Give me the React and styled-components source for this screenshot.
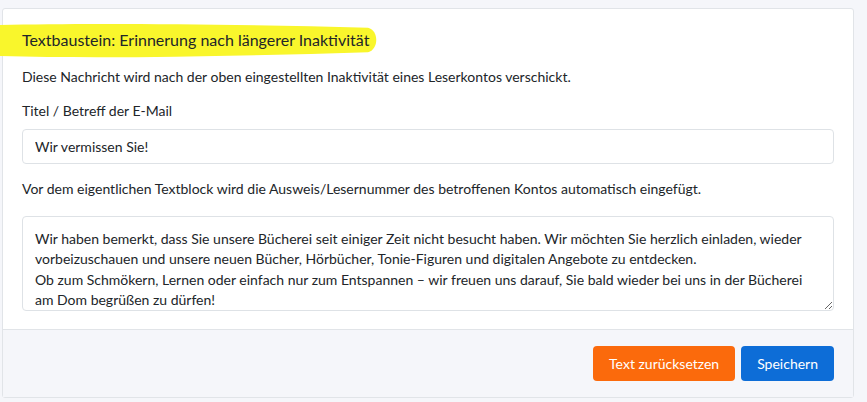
import styled, { createGlobalStyle } from 'styled-components'

const GlobalStyle = createGlobalStyle`
  html, body {
    margin: 0;
    background: #f5f6fa;
  }
  body {
    padding: 8px 13px 0 2px;
    font-family: "Segoe UI", Lato, sans-serif;
    color: #212529;
  }
`

const bodyText = `Wir haben bemerkt, dass Sie unsere Bücherei seit einiger Zeit nicht besucht haben. Wir möchten Sie herzlich einladen, wieder vorbeizuschauen und unsere neuen Bücher, Hörbücher, Tonie-Figuren und digitalen Angebote zu entdecken.
Ob zum Schmökern, Lernen oder einfach nur zum Entspannen – wir freuen uns darauf, Sie bald wieder bei uns in der Bücherei am Dom begrüßen zu dürfen!`

const App = () => {
  return (
    <>
      <GlobalStyle />
      <Card>
        <CardBody>
          <TitleWrap>
            <Highlight viewBox="0 0 380 36" preserveAspectRatio="none">
              <path d="M0 2 C 90 0, 230 1, 370 5 C 381 8, 381 27, 370 30 C 240 34, 110 37, 0 34 Z" fill="#f9f62c" />
            </Highlight>
            <Title>Textbaustein: Erinnerung nach längerer Inaktivität</Title>
          </TitleWrap>
          <Text $mt={14}>Diese Nachricht wird nach der oben eingestellten Inaktivität eines Leserkontos verschickt.</Text>
          <Label>Titel / Betreff der E-Mail</Label>
          <Input defaultValue="Wir vermissen Sie!" />
          <Text $mt={14}>Vor dem eigentlichen Textblock wird die Ausweis/Lesernummer des betroffenen Kontos automatisch eingefügt.</Text>
          <TextArea defaultValue={bodyText} />
        </CardBody>
        <Footer>
          <Button $bg="#fb6a0c">Text zurücksetzen</Button>
          <Button $bg="#0d6dd7">Speichern</Button>
        </Footer>
      </Card>
    </>
  )
}

export default App

const Card = styled.div`
  background: #fff;
  border: 1px solid #e1e4e8;
  border-radius: 3px;
  width: 850px;
`

const CardBody = styled.div`
  padding: 19px 19px 18px 19px;
`

const TitleWrap = styled.div`
  position: relative;
`

const Highlight = styled.svg`
  position: absolute;
  left: -22px;
  top: -5px;
  width: 378px;
  height: 35px;
`

const Title = styled.h5`
  position: relative;
  margin: 0;
  font-size: 16px;
  font-weight: 400;
  line-height: 24px;
`

const Text = styled.p`
  margin: ${p => p.$mt}px 0 0;
  font-size: 14px;
  line-height: 21px;
`

const Label = styled.label`
  display: block;
  margin-top: 13px;
  font-size: 14px;
  line-height: 21px;
`

const Input = styled.input`
  display: block;
  box-sizing: border-box;
  width: 100%;
  height: 35px;
  margin-top: 8px;
  padding: 6px 12px;
  border: 1px solid #dee2e6;
  border-radius: 4px;
  font-family: inherit;
  font-size: 14px;
  color: #212529;
  outline: none;
`

const TextArea = styled.textarea`
  display: block;
  box-sizing: border-box;
  width: 100%;
  height: 95px;
  margin-top: 17px;
  padding: 12px 12px 0;
  border: 1px solid #dee2e6;
  border-radius: 4px;
  font-family: inherit;
  font-size: 14px;
  line-height: 20.3px;
  color: #212529;
  resize: vertical;
  overflow: hidden;
  outline: none;
`

const Footer = styled.div`
  display: flex;
  justify-content: flex-end;
  gap: 6px;
  padding: 16px 19px 16px;
  background: #f5f6fa;
  border-top: 1px solid #e1e4e8;
`

const Button = styled.button`
  height: 35px;
  padding: 0 16px;
  border: none;
  border-radius: 4px;
  background: ${p => p.$bg};
  color: #fff;
  font-family: inherit;
  font-size: 14px;
  cursor: pointer;
`
